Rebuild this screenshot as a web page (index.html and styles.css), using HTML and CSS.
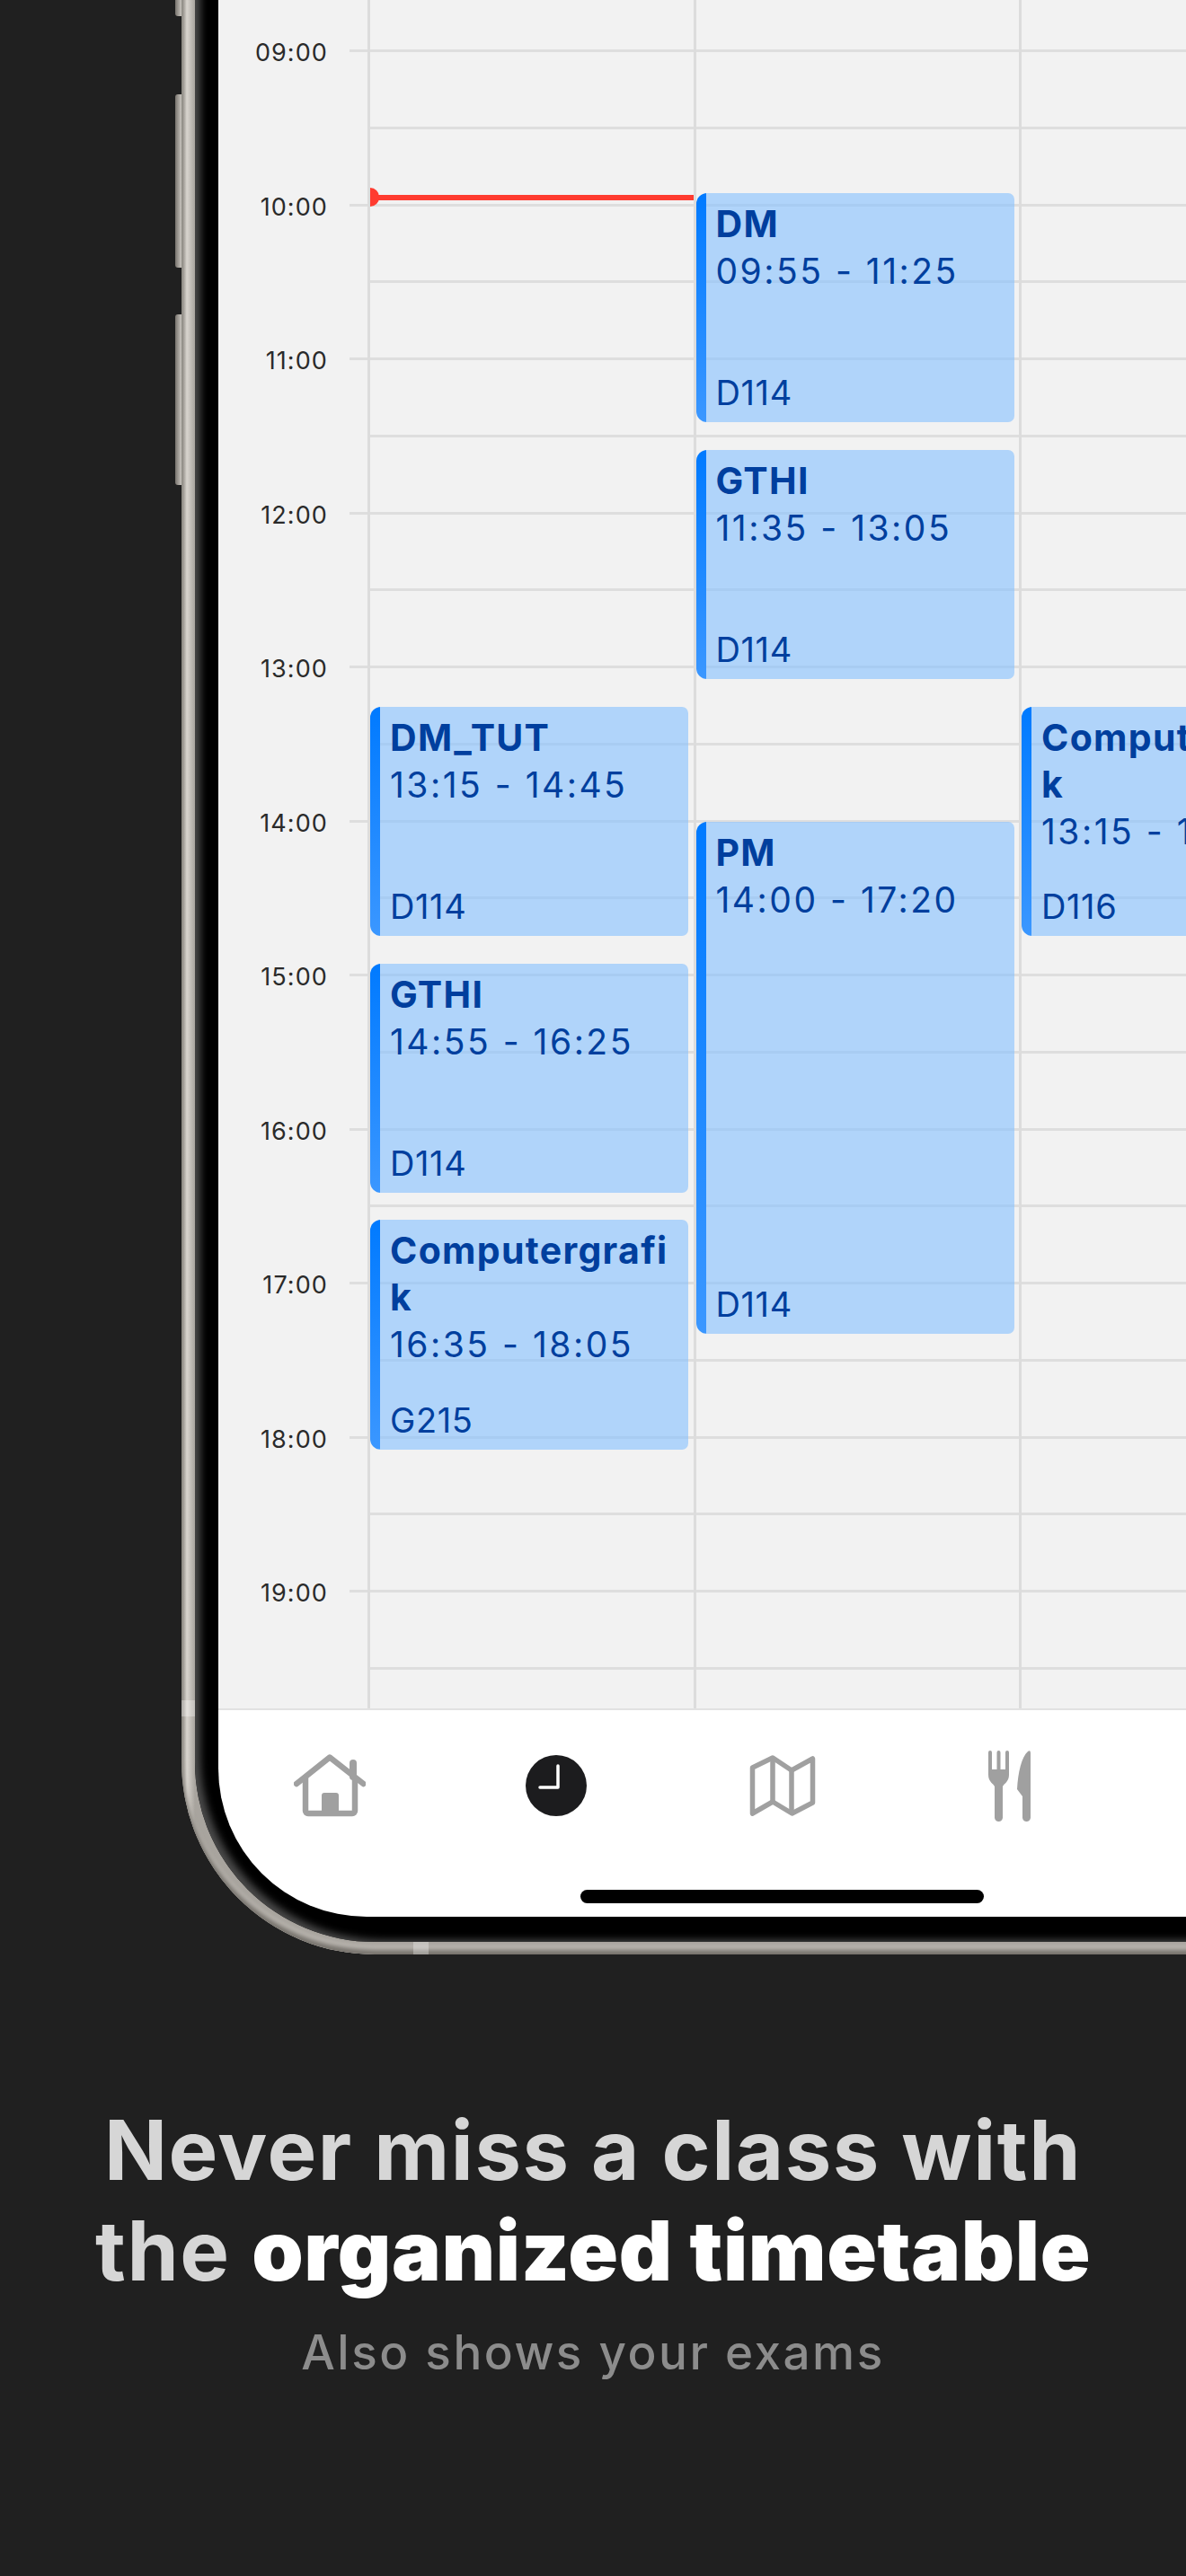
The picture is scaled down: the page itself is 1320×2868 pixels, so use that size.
FILE: index.html
```html
<!DOCTYPE html>
<html lang="en">
<head>
    <meta charset="UTF-8">
    <meta name="viewport" content="width=device-width, initial-scale=1.0">
    <title>Timetable</title>
    <link rel="stylesheet" href="styles.css">
</head>
<body>
    <div class="phone">
        <span class="side-btn btn-top"></span>
        <span class="side-btn btn-up"></span>
        <span class="side-btn btn-down"></span>
        <span class="band band-left"></span>
        <span class="band band-bottom"></span>
        <div class="bezel">
            <div class="screen">
                <div class="timetable">
                    <div class="hour"><span class="hour-label">09:00</span><div class="slots"><div class="slot"></div><div class="slot-half"></div></div></div>
                    <div class="hour"><span class="hour-label">10:00</span><div class="slots"><div class="slot"></div><div class="slot-half"></div></div></div>
                    <div class="hour"><span class="hour-label">11:00</span><div class="slots"><div class="slot"></div><div class="slot-half"></div></div></div>
                    <div class="hour"><span class="hour-label">12:00</span><div class="slots"><div class="slot"></div><div class="slot-half"></div></div></div>
                    <div class="hour"><span class="hour-label">13:00</span><div class="slots"><div class="slot"></div><div class="slot-half"></div></div></div>
                    <div class="hour"><span class="hour-label">14:00</span><div class="slots"><div class="slot"></div><div class="slot-half"></div></div></div>
                    <div class="hour"><span class="hour-label">15:00</span><div class="slots"><div class="slot"></div><div class="slot-half"></div></div></div>
                    <div class="hour"><span class="hour-label">16:00</span><div class="slots"><div class="slot"></div><div class="slot-half"></div></div></div>
                    <div class="hour"><span class="hour-label">17:00</span><div class="slots"><div class="slot"></div><div class="slot-half"></div></div></div>
                    <div class="hour"><span class="hour-label">18:00</span><div class="slots"><div class="slot"></div><div class="slot-half"></div></div></div>
                    <div class="hour"><span class="hour-label">19:00</span><div class="slots"><div class="slot"></div><div class="slot-half"></div></div></div>

                    <!-- --start and --mins: minutes after 09:00 and length of the lesson -->
                    <div class="days">
                        <div class="day">
                            <div class="now-line"></div>
                            <div class="event" style="--start:255;--mins:90">
                                <div class="event-title">DM_TUT</div>
                                <div class="event-time">13:15 - 14:45</div>
                                <div class="event-room">D114</div>
                            </div>
                            <div class="event" style="--start:355;--mins:90">
                                <div class="event-title">GTHI</div>
                                <div class="event-time">14:55 - 16:25</div>
                                <div class="event-room">D114</div>
                            </div>
                            <div class="event" style="--start:455;--mins:90">
                                <div class="event-title">Computergrafik</div>
                                <div class="event-time">16:35 - 18:05</div>
                                <div class="event-room">G215</div>
                            </div>
                        </div>
                        <div class="day">
                            <div class="event" style="--start:55;--mins:90">
                                <div class="event-title">DM</div>
                                <div class="event-time">09:55 - 11:25</div>
                                <div class="event-room">D114</div>
                            </div>
                            <div class="event" style="--start:155;--mins:90">
                                <div class="event-title">GTHI</div>
                                <div class="event-time">11:35 - 13:05</div>
                                <div class="event-room">D114</div>
                            </div>
                            <div class="event" style="--start:300;--mins:200">
                                <div class="event-title">PM</div>
                                <div class="event-time">14:00 - 17:20</div>
                                <div class="event-room">D114</div>
                            </div>
                        </div>
                        <div class="day">
                            <div class="event" style="--start:255;--mins:90">
                                <div class="event-title">Computergrafik</div>
                                <div class="event-time">13:15 - 14:45</div>
                                <div class="event-room">D116</div>
                            </div>
                        </div>
                    </div>
                </div>

                <nav class="tabbar">
                    <div class="tabs">
                        <svg class="tab-icon" viewBox="0 0 80 80" aria-label="Home">
                            <path d="M3 38 40 8.500 77.500 38" fill="none" stroke="#a0a0a0" stroke-width="6.500" stroke-linecap="round" stroke-linejoin="round"/>
                            <path d="M13 30V68a3 3 0 0 0 3 3H65a3 3 0 0 0 3-3V30" fill="none" stroke="#a0a0a0" stroke-width="6.500"/>
                            <path d="M66 15V30" stroke="#a0a0a0" stroke-width="8" stroke-linecap="round"/>
                            <path d="M31 51a3 3 0 0 1 3-3H47a3 3 0 0 1 3 3V74H31Z" fill="#a0a0a0"/>
                        </svg>
                        <svg class="tab-icon" viewBox="0 0 80 80" aria-label="Timetable">
                            <circle cx="40" cy="40" r="34" fill="#1c1c1e"/>
                            <path d="M42 18V42H22" fill="none" stroke="#fff" stroke-width="3.500" stroke-linecap="round" stroke-linejoin="round"/>
                        </svg>
                        <svg class="tab-icon" viewBox="0 0 80 80" aria-label="Map">
                            <path d="M6.500 20 29 9 50 23 73.500 10V59L50.500 71 29 58 6.500 71Z" fill="none" stroke="#a0a0a0" stroke-width="5.500" stroke-linejoin="round"/>
                            <path d="M29 9V58M50 23V71" fill="none" stroke="#a0a0a0" stroke-width="5.500"/>
                        </svg>
                        <svg class="tab-icon" viewBox="0 0 80 80" aria-label="Food">
                            <path d="M19 3V24M28.500 3V24M38 3V24" fill="none" stroke="#a0a0a0" stroke-width="4" stroke-linecap="round"/>
                            <path d="M17 22H40V28C40 36 34 38 33 41V75.500a4.500 4.500 0 0 1-9 0V41C23 38 17 36 17 28Z" fill="#a0a0a0"/>
                            <path d="M61 2C64 0 64 3 64 5V75.500a4.500 4.500 0 0 1-9 0V52L49 44C50 25 54 8 61 2Z" fill="#a0a0a0"/>
                        </svg>
                    </div>
                    <div class="home-indicator"></div>
                </nav>
            </div>
        </div>
    </div>

    <section class="caption">
        <h1>Never miss a class with<br>the <strong>organized timetable</strong></h1>
        <p>Also shows your exams</p>
    </section>
</body>
</html>
```

FILE: styles.css
```css
:root {
  --page: #202020;
  --grid-bg: #f2f2f2;
  --grid-line: #dedede;
  --icon: #a0a0a0;
  --event-text: #003f9e;
}
html, body {
  margin: 0;
  padding: 0;
  height: 2868px;
  overflow: hidden;
}
body {
  background: var(--page);
  font-family: Inter, "Liberation Sans", sans-serif;
}

/* Phone frame, runs off the top and right of the picture */
.phone {
  position: relative;
  width: 1340px;
  margin-left: 202px;
  padding: 0 0 14px 15px;
  border-bottom-left-radius: 215px;
  background: linear-gradient(90deg, #8b8781 0, #d9d5cf 6px, #a8a49e 15px);
  box-shadow: inset 0 -5px 5px #77736d, inset 0 -10px 4px #bdb9b3;
}
.side-btn {
  position: absolute;
  left: -7px;
  width: 7px;
  border-radius: 3px 0 0 3px;
  background: linear-gradient(90deg, #77736d, #c9c5bf);
}
.btn-top { top: -20px; height: 38px; }
.btn-up { top: 105px; height: 193px; }
.btn-down { top: 350px; height: 190px; }
.band {
  position: absolute;
  background: rgba(255, 255, 255, 0.3);
}
.band-left { left: 0; top: 1893px; width: 15px; height: 18px; }
.band-bottom { left: 258px; bottom: 0; width: 17px; height: 14px; }
.bezel {
  padding: 0 0 28px 26px;
  border-bottom-left-radius: 200px;
  background: #000;
  box-shadow: inset 10px -6px 8px -4px #4a4a4a;
}
.screen {
  width: 1255px;
  height: 2134px;
  overflow: hidden;
  border-bottom-left-radius: 165px;
  background: #fff;
}

/* Timetable */
.timetable {
  position: relative;
  box-sizing: border-box;
  height: 1904px;
  padding-top: 55px;
  overflow: hidden;
  background: var(--grid-bg);
  border-bottom: 2px solid #e2e2e2;
}
.hour {
  display: flex;
  height: 171.5px;
}
.hour-label {
  box-sizing: border-box;
  width: 146px;
  height: 34px;
  margin-top: -13px;
  padding-right: 24px;
  text-align: right;
  font-size: 27px;
  line-height: 34px;
  letter-spacing: 1.1px;
  color: #2a2a2a;
}
.slots {
  flex: 1;
}
.slot {
  height: 85.75px;
  box-sizing: border-box;
  border-top: 3px solid var(--grid-line);
}
.slot-half {
  height: 85.75px;
  box-sizing: border-box;
  margin-left: 22px;
  border-top: 3px solid var(--grid-line);
}
.days {
  position: absolute;
  top: 0;
  bottom: 0;
  left: 166px;
  display: flex;
}
.day {
  position: relative;
  width: 362.5px;
  box-sizing: border-box;
  border-left: 3px solid #dcdcdc;
}
.now-line {
  position: absolute;
  top: 217px;
  left: 0;
  right: -3px;
  height: 6px;
  background: #ff3b30;
}
.now-line::before {
  content: "";
  position: absolute;
  top: -8px;
  left: 0;
  width: 10px;
  height: 21px;
  border-radius: 0 11px 11px 0;
  background: #ff3b30;
}

/* Lessons */
.event {
  position: absolute;
  left: 0;
  top: calc(58px + var(--start) * 2.858px);
  display: flex;
  flex-direction: column;
  box-sizing: border-box;
  width: 354px;
  height: calc(var(--mins) * 2.858px - 2px);
  padding: 8px 12px 11px 22px;
  border-radius: 12px 7px 7px 12px;
  background: linear-gradient(#007aff, #3b97ff) left / 11px 100% no-repeat, rgba(132, 192, 255, 0.6);
  color: var(--event-text);
  overflow-wrap: anywhere;
}
.event-title {
  font-size: 41px;
  font-weight: 700;
  line-height: 52px;
  letter-spacing: 1.3px;
}
.event-time {
  margin-top: 1px;
  font-size: 39px;
  line-height: 52px;
  letter-spacing: 2.5px;
}
.event-room {
  margin-top: auto;
  font-size: 38px;
  line-height: 44px;
  letter-spacing: 0.6px;
}

/* Tab bar */
.tabbar {
  height: 230px;
  box-sizing: border-box;
  padding-top: 44px;
}
.tabs {
  display: flex;
  gap: 172px;
  padding-left: 84px;
}
.tab-icon {
  display: block;
  flex: none;
  width: 80px;
  height: 80px;
}
.home-indicator {
  width: 449px;
  height: 15px;
  margin: 76px 0 0 403px;
  border-radius: 8px;
  background: #000;
}

/* Caption under the phone */
.caption {
  margin-top: 162px;
  text-align: center;
}
.caption h1 {
  margin: 0;
  font-size: 92px;
  font-weight: 700;
  line-height: 112px;
  letter-spacing: 1.6px;
  color: #d6d6d6;
}
.caption strong {
  letter-spacing: 0.6px;
  color: #fff;
}
.caption p {
  margin: 25px 0 0;
  font-size: 53px;
  font-weight: 500;
  line-height: 64px;
  letter-spacing: 2.5px;
  color: #8c8c8c;
}
```
